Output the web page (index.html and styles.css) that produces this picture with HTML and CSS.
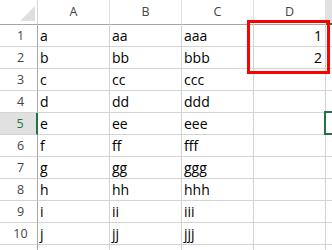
FILE: index.html
```html
<!DOCTYPE html>
<html>
<head>
<meta charset="utf-8">
<link rel="stylesheet" href="styles.css">
</head>
<body>
<div class="sheet">
  <div class="grid">
    <div class="corner"><span class="tri"></span></div>
    <div class="colh">A</div><div class="colh">B</div><div class="colh">C</div><div class="colh">D</div><div class="colh colh-active"></div>

    <div class="rowh">1</div><div class="cell">a</div><div class="cell">aa</div><div class="cell">aaa</div><div class="cell num">1</div><div class="cell"></div>
    <div class="rowh">2</div><div class="cell">b</div><div class="cell">bb</div><div class="cell">bbb</div><div class="cell num">2</div><div class="cell"></div>
    <div class="rowh">3</div><div class="cell">c</div><div class="cell">cc</div><div class="cell">ccc</div><div class="cell"></div><div class="cell"></div>
    <div class="rowh">4</div><div class="cell">d</div><div class="cell">dd</div><div class="cell">ddd</div><div class="cell"></div><div class="cell"></div>
    <div class="rowh rowh-active">5</div><div class="cell">e</div><div class="cell">ee</div><div class="cell">eee</div><div class="cell"></div><div class="cell"></div>
    <div class="rowh">6</div><div class="cell">f</div><div class="cell">ff</div><div class="cell">fff</div><div class="cell"></div><div class="cell"></div>
    <div class="rowh">7</div><div class="cell">g</div><div class="cell">gg</div><div class="cell">ggg</div><div class="cell"></div><div class="cell"></div>
    <div class="rowh">8</div><div class="cell">h</div><div class="cell">hh</div><div class="cell">hhh</div><div class="cell"></div><div class="cell"></div>
    <div class="rowh">9</div><div class="cell">i</div><div class="cell">ii</div><div class="cell">iii</div><div class="cell"></div><div class="cell"></div>
    <div class="rowh">10</div><div class="cell">j</div><div class="cell">jj</div><div class="cell">jjj</div><div class="cell"></div><div class="cell"></div>
    <div class="rowh"></div><div class="cell"></div><div class="cell"></div><div class="cell"></div><div class="cell"></div><div class="cell"></div>
  </div>
  <div class="active-cell"></div>
  <div class="highlight"></div>
</div>
</body>
</html>
```

FILE: styles.css
```css
html, body {
  margin: 0;
  padding: 0;
  background: #ffffff;
  overflow: hidden;
}

.sheet {
  position: relative;
  width: 332px;
  height: 250px;
  overflow: hidden;
}

.grid {
  display: grid;
  grid-template-columns: 38px repeat(5, 72px);
  grid-template-rows: 25px;
  grid-auto-rows: 22px;
  width: max-content;
}

.grid > div {
  box-sizing: border-box;
  border-right: 1px solid #d4d4d4;
  border-bottom: 1px solid #d4d4d4;
}

.corner {
  position: relative;
  background: #ffffff;
  border-right-color: #d4d4d4 !important;
  border-bottom-color: #a6a6a6 !important;
}

.tri {
  position: absolute;
  left: 20px;
  top: 6px;
  width: 0;
  height: 0;
  border-left: 15px solid transparent;
  border-bottom: 15px solid #dfdfdf;
}

.colh {
  font-family: "Open Sans", "Noto Sans", sans-serif;
  font-size: 12.5px;
  color: #444444;
  text-align: center;
  line-height: 24px;
  background: #ffffff;
  border-bottom-color: #a6a6a6 !important;
  border-right-color: #e1e1e1 !important;
}

.colh-active {
  background: #e1e1e1;
  border-bottom: 2px solid #217346 !important;
}

.rowh {
  font-family: "Open Sans", "Noto Sans", sans-serif;
  font-size: 12.5px;
  color: #444444;
  text-align: center;
  padding-left: 4px;
  line-height: 22px;
  background: #ffffff;
  border-right-color: #a6a6a6 !important;
}

.rowh-active {
  background: #e1e1e1;
  color: #217346;
  border-right: 2px solid #217346 !important;
}

.cell {
  font-family: "Open Sans", "Noto Sans", sans-serif;
  font-size: 14px;
  color: #000000;
  line-height: 22px;
  padding-left: 2px;
  white-space: nowrap;
}

.cell.num {
  text-align: right;
  padding-left: 0;
  padding-right: 3px;
}

.active-cell {
  position: absolute;
  left: 324px;
  top: 111px;
  width: 75px;
  height: 24px;
  box-sizing: border-box;
  border: 2px solid #217346;
}

.highlight {
  position: absolute;
  left: 247px;
  top: 20px;
  width: 83px;
  height: 54px;
  box-sizing: border-box;
  border: 3px solid #ff0000;
}
```
